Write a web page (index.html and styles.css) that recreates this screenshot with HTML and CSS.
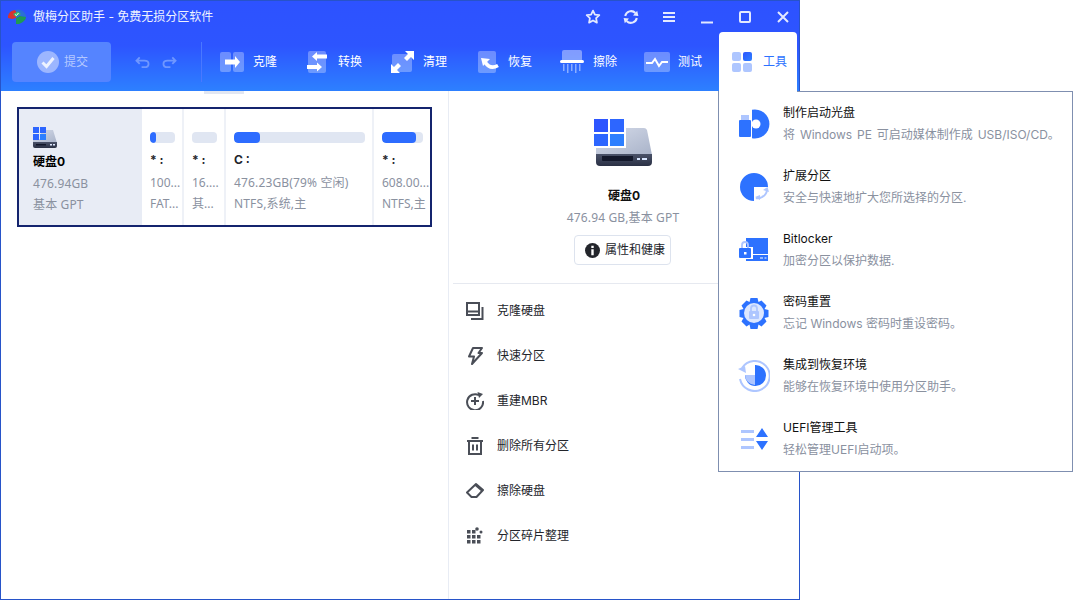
FILE: index.html
```html
<!DOCTYPE html>
<html lang="zh-CN">
<head>
<meta charset="utf-8">
<title>傲梅分区助手</title>
<link rel="stylesheet" href="styles.css">
</head>
<body>
<svg class="defs" width="0" height="0" aria-hidden="true">
  <defs>
    <linearGradient id="hdd" x1="0" y1="0" x2="1" y2="1"><stop offset="0" stop-color="#d6dcea"/><stop offset="1" stop-color="#a9b3c9"/></linearGradient>
    <linearGradient id="hddb" x1="0" y1="0" x2="0" y2="1"><stop offset="0" stop-color="#4a5269"/><stop offset="1" stop-color="#2a3044"/></linearGradient>
    <linearGradient id="tile" x1="0" y1="0" x2="1" y2="1"><stop offset="0" stop-color="#2d55ff"/><stop offset="1" stop-color="#2d80ff"/></linearGradient>
  </defs>
</svg>
<div class="window">
  <header class="header">
    <div class="titlebar">
      <svg class="logo" width="18" height="16" viewBox="0 0 18 16">
        <path d="M0 7 Q1 2 7 1 L9 2 L8 6 L8 9 L4 10 L0 9Z" fill="#d8332f"/>
        <path d="M7 1 Q14 -1 18 6 L18 8 L12 7 L9 4Z" fill="#2a6fd6"/>
        <path d="M8 9 L12 7 L18 8 Q18 12 11 15 L8 15Z" fill="#1f9a55"/>
        <path d="M5 5 L10 2.500 L13 5 L8 8Z" fill="#36b66c"/>
        <path d="M7 5.500 L8.500 6.500 L10.500 4" fill="none" stroke="#e8fff0" stroke-width="1"/>
      </svg>
      <span class="app-title">傲梅分区助手 - 免费无损分区软件</span>
      <div class="win-buttons">
        <svg class="wb" viewBox="0 0 16 16"><path d="M8 1.600 L9.900 5.600 L14.300 6.200 L11.100 9.200 L11.900 13.600 L8 11.500 L4.100 13.600 L4.900 9.200 L1.700 6.200 L6.100 5.600Z" fill="none" stroke="#e3e9ff" stroke-width="1.800" stroke-linejoin="round"/></svg>
        <svg class="wb" viewBox="0 0 16 16"><path d="M2.200 7 A6 6 0 0 1 12.400 4" fill="none" stroke="#e3e9ff" stroke-width="2"/><path d="M13.800 9 A6 6 0 0 1 3.600 12" fill="none" stroke="#e3e9ff" stroke-width="2"/><path d="M10 6.400 L15.400 7 L14.200 1.800Z M6 9.600 L.6 9 L1.800 14.200Z" fill="#e3e9ff"/></svg>
        <svg class="wb" viewBox="0 0 16 16"><path d="M2 3h12v2H2zM2 7h12v2H2zM2 11h12v2H2z" fill="#e3e9ff"/></svg>
        <svg class="wb" viewBox="0 0 16 16"><path d="M2 12.500h12v2H2z" fill="#e3e9ff"/></svg>
        <svg class="wb" viewBox="0 0 16 16"><rect x="3" y="3" width="10" height="10" rx="1" fill="none" stroke="#e3e9ff" stroke-width="2"/></svg>
        <svg class="wb" viewBox="0 0 16 16"><path d="M3 3 L13 13 M13 3 L3 13" stroke="#e3e9ff" stroke-width="2"/></svg>
      </div>
    </div>
    <div class="toolbar">
      <button class="submit">
        <svg width="22" height="22" viewBox="0 0 22 22"><circle cx="11" cy="11" r="11" fill="#b4c7ff" opacity=".75"/><path d="M5.500 11.500 L9.500 15.500 L16.500 7" fill="none" stroke="#edf2ff" stroke-width="3"/></svg>
        <span>提交</span>
      </button>
      <div class="history">
        <svg width="15" height="13" viewBox="0 0 16 14"><path d="M5 1.500 L1.500 5 L5 8.500 M2 5 H10 Q14.500 5 14.500 8.500 Q14.500 12 10 12 H7" fill="none" stroke="#6f97ff" stroke-width="2"/></svg>
        <svg width="15" height="13" viewBox="0 0 16 14"><path d="M11 1.500 L14.500 5 L11 8.500 M14 5 H6 Q1.500 5 1.500 8.500 Q1.500 12 6 12 H9" fill="none" stroke="#6f97ff" stroke-width="2"/></svg>
      </div>
      <div class="tool-sep"></div>
      <nav class="tools">
        <a class="tool">
          <svg width="24" height="20" viewBox="0 0 24 20"><rect width="11" height="20" rx="2" fill="#fff" opacity=".3"/><rect x="13" width="11" height="20" rx="2" fill="#fff" opacity=".3"/><path d="M5 7.500h10V4l5 6-5 6v-3.500H5z" fill="#fff"/></svg>
          <span>克隆</span>
        </a>
        <a class="tool tool-wide">
          <svg width="20" height="22" viewBox="0 0 20 22"><rect x="1" width="18" height="22" rx="2" fill="#fff" opacity=".3"/><path d="M20 3.500H10V1L5 5.500l5 4.500V7.500h10zM0 14h10v-2.500l5 4.500-5 4.500V18H0z" fill="#fff"/></svg>
          <span>转换</span>
        </a>
        <a class="tool">
          <svg width="23" height="22" viewBox="0 0 23 22"><rect x="1" y="3" width="20" height="18" rx="2" fill="#fff" opacity=".3"/><path d="M14 0h9v9l-3-3-4 4-3-3 4-4zM9 22H0v-9l3 3 4-4 3 3-4 4z" fill="#fff"/></svg>
          <span>清理</span>
        </a>
        <a class="tool">
          <svg width="21" height="22" viewBox="0 0 21 22"><rect width="18" height="22" rx="2" fill="#fff" opacity=".3"/><path d="M3 7 L12 8 L5 15Z" fill="#fff"/><path d="M7 11 Q12 19 20 14.500" fill="none" stroke="#fff" stroke-width="3.500"/></svg>
          <span>恢复</span>
        </a>
        <a class="tool">
          <svg width="24" height="24" viewBox="0 0 24 24"><path d="M2 2Q2 0 4 0H20Q22 0 22 2V10H2z" fill="#fff" opacity=".4"/><rect y="10" width="24" height="3" rx="1.500" fill="#fff"/><path d="M3 14h1.500v7H3zM7 14h1.500v9H7zM11 14h1.500v7H11zM15 14h1.500v9H15zM19 14h1.500v7H19z" fill="#fff" opacity=".45"/></svg>
          <span>擦除</span>
        </a>
        <a class="tool tool-tight">
          <svg width="26" height="20" viewBox="0 0 26 20"><rect width="26" height="20" rx="2" fill="#fff" opacity=".3"/><path d="M2 11h6l3-4 4 7 3-4h6" fill="none" stroke="#fff" stroke-width="2"/></svg>
          <span>测试</span>
        </a>
        <a class="tool tool-active">
          <svg width="20" height="20" viewBox="0 0 20 20"><rect width="9" height="9" rx="2" fill="#aec6ff"/><rect x="11" width="9" height="9" rx="2" fill="url(#tile)"/><rect y="11" width="9" height="9" rx="2" fill="#aec6ff"/><rect x="11" y="11" width="9" height="9" rx="2" fill="#aec6ff"/></svg>
          <span>工具</span>
        </a>
      </nav>
    </div>
  </header>
  <main class="main">
    <section class="left">
      <div class="scroll-thumb"></div>
      <div class="disk-card">
        <div class="cell cell-disk">
          <svg class="disk-icon-small" width="24" height="21" viewBox="0 0 24 21"><path d="M8 3H20L24 16H0V12H8z" fill="url(#hdd)"/><path d="M0 15H24V19Q24 21 22 21H2Q0 21 0 19z" fill="url(#hddb)"/><path d="M3 17h10v1.500H3z" fill="#12172a"/><path d="M17 17h2v1.500h-2zM20 17h2v1.500h-2z" fill="#dfe9ff"/><rect width="6" height="6" fill="#2d66ff"/><rect x="7" width="6" height="6" fill="#2d66ff"/><rect y="7" width="6" height="6" fill="#2d66ff"/><rect x="7" y="7" width="6" height="6" fill="#2d7fff"/></svg>
          <div class="disk-name">硬盘0</div>
          <div class="meta">476.94GB</div>
          <div class="meta">基本 GPT</div>
        </div>
        <div class="cell part part-a">
          <div class="bar"><i class="fill" style="width:24%"></i></div>
          <div class="part-name">* :</div>
          <div class="meta clip">100...</div>
          <div class="meta clip">FAT...</div>
        </div>
        <div class="cell part part-b">
          <div class="bar"></div>
          <div class="part-name">* :</div>
          <div class="meta clip">16....</div>
          <div class="meta clip">其...</div>
        </div>
        <div class="cell part part-c">
          <div class="bar"><i class="fill" style="width:20%"></i></div>
          <div class="part-name">C :</div>
          <div class="meta">476.23GB(79% 空闲)</div>
          <div class="meta">NTFS,系统,主</div>
        </div>
        <div class="cell part part-d">
          <div class="bar"><i class="fill" style="width:83%"></i></div>
          <div class="part-name">* :</div>
          <div class="meta clip">608.00...</div>
          <div class="meta clip">NTFS,主</div>
        </div>
      </div>
    </section>
    <aside class="right">
      <div class="summary">
        <svg class="disk-icon" width="58" height="47" viewBox="0 0 58 47"><path d="M30 9H50Q52 9 53 11L58 36H2L2 28H30z" fill="url(#hdd)"/><path d="M2 35H58V43Q58 47 54 47H6Q2 47 2 43z" fill="url(#hddb)"/><path d="M8 37H39V41Q39 42 38 42H9Q8 42 8 41z" fill="#14192c"/><path d="M43 39h3v2h-3zM48 39h5v2h-5z" fill="#d8e6ff"/><rect x="-1" y="-1" width="33" height="30" fill="#fff"/><rect width="14" height="13" fill="#2d55ff"/><rect x="16" width="14" height="13" fill="#2d66ff"/><rect y="15" width="14" height="12" fill="#2d66ff"/><rect x="16" y="15" width="14" height="12" fill="#2d7fff"/></svg>
        <div class="summary-name">硬盘0</div>
        <div class="meta summary-meta">476.94 GB,基本 GPT</div>
        <button class="health">
          <svg width="15" height="15" viewBox="0 0 15 15"><circle cx="7.500" cy="7.500" r="7.500" fill="#23252b"/><path d="M6.300 2.800h2.400v2.200H6.300zM6.300 6.300h2.400v6H6.300z" fill="#fff"/></svg>
          <span>属性和健康</span>
        </button>
      </div>
      <ul class="actions">
        <li><svg width="18" height="18" viewBox="0 0 18 18"><path d="M1 1h12v12H1zM1 9.500h12" fill="none" stroke="#4a4e57" stroke-width="2"/><path d="M16.500 5v12H5" fill="none" stroke="#4a4e57" stroke-width="2"/></svg><span>克隆硬盘</span></li>
        <li><svg width="18" height="18" viewBox="0 0 18 18"><path d="M7 1h9l-3.500 5H16L6 17l2-7.500H3z" fill="none" stroke="#4a4e57" stroke-width="2" stroke-linejoin="round"/></svg><span>快速分区</span></li>
        <li><svg width="18" height="18" viewBox="0 0 18 18"><path d="M13 3.200A8 8 0 1 0 17 9" fill="none" stroke="#4a4e57" stroke-width="2"/><path d="M11.500 0l5.500 2-4 4zM5 8h3V5h2v3h3v2h-3v3H8v-3H5z" fill="#4a4e57"/></svg><span>重建MBR</span></li>
        <li><svg width="18" height="18" viewBox="0 0 18 18"><path d="M1 3h16v2H1zM5.500 0h7v2h-7z" fill="#4a4e57"/><path d="M3 5v12h12V5M7 7.500v6M11 7.500v6" fill="none" stroke="#4a4e57" stroke-width="2"/></svg><span>删除所有分区</span></li>
        <li><svg width="18" height="18" viewBox="0 0 18 18"><path d="M10 2 L17 8 L10.500 15 H5.500 L1 10.500Z" fill="none" stroke="#4a4e57" stroke-width="2" stroke-linejoin="round"/><path d="M10 2 L17 8 L15.500 9.500 L8.500 3.500Z" fill="#4a4e57"/></svg><span>擦除硬盘</span></li>
        <li><svg width="18" height="18" viewBox="0 0 18 18"><g fill="#4a4e57"><rect x="1" y="3" width="3.500" height="3.500"/><rect x="6" y="3" width="3.500" height="3.500"/><rect x="1" y="8" width="3.500" height="3.500"/><rect x="6" y="8" width="3.500" height="3.500"/><rect x="11" y="8" width="3.500" height="3.500"/><rect x="1" y="13" width="3.500" height="3.500"/><rect x="6" y="13" width="3.500" height="3.500"/><rect x="11" y="13" width="3.500" height="3.500"/><circle cx="11" cy="2" r="1.800"/><circle cx="15" cy="5" r="1.500"/></g></svg><span>分区碎片整理</span></li>
      </ul>
    </aside>
  </main>
</div>
<div class="popover">
  <div class="pop-item">
    <svg width="32" height="30" viewBox="0 0 32 30"><path d="M14 .8A14.500 14.500 0 1 1 14 29.200z" fill="#2d72ff"/><circle cx="18" cy="15" r="4.500" fill="#fff"/><rect x="1" y="11" width="12" height="17" rx="1" fill="#2d72ff"/><rect x="3" y="6" width="8" height="5" fill="#aec6ff"/></svg>
    <div><div class="pop-title">制作启动光盘</div><div class="pop-desc pop-desc-wide">将 Windows PE 可启动媒体制作成 USB/ISO/CD。</div></div>
  </div>
  <div class="pop-item">
    <svg width="32" height="30" viewBox="0 0 32 30"><path d="M16 1A14 14 0 0 1 30 15H16V29A14 14 0 0 1 16 1z" fill="#2d72ff"/><path d="M29 18A9 9 0 0 1 24 25M18 26Q21 27 24 25" fill="none" stroke="#aec6ff" stroke-width="2"/><path d="M25 18l4.500-3 1.500 5zM17 25l5-2 0 5z" fill="#aec6ff"/></svg>
    <div><div class="pop-title">扩展分区</div><div class="pop-desc">安全与快速地扩大您所选择的分区.</div></div>
  </div>
  <div class="pop-item">
    <svg width="32" height="24" viewBox="0 0 32 24"><path d="M8 0H30V23H8V21H15V9H8z" fill="#2d72ff"/><path d="M15 16.500H30M22 20h3M26.500 20h2" stroke="#fff" stroke-width="1"/><rect x="1" y="10" width="12" height="10" rx="1" fill="#2d72ff"/><path d="M4 10V7a3 3 0 0 1 6 0V10" fill="none" stroke="#aec6ff" stroke-width="1.800"/><rect x="6" y="14" width="2.500" height="2.500" fill="#fff"/></svg>
    <div><div class="pop-title">Bitlocker</div><div class="pop-desc">加密分区以保护数据.</div></div>
  </div>
  <div class="pop-item">
    <svg width="32" height="32" viewBox="0 0 32 32"><path d="M12.500 1h7l1 4 3-1.500 5 5-2 3.500 4 1v7l-4 1 2 3.500-5 5-3-2-1 4.500h-7l-1-4.500-3 2-5-5 2-3.500-4-1v-7l4-1-2-3.500 5-5 3 1.500z" fill="#2d72ff"/><circle cx="16" cy="16" r="10" fill="#dce7ff"/><rect x="11" y="14" width="10" height="8" rx="1" fill="#aec6ff"/><path d="M13 14v-2.500a3 3 0 0 1 6 0V14" fill="none" stroke="#aec6ff" stroke-width="1.800"/><circle cx="16" cy="18" r="1.300" fill="#fff"/></svg>
    <div><div class="pop-title">密码重置</div><div class="pop-desc">忘记 Windows 密码时重设密码。</div></div>
  </div>
  <div class="pop-item">
    <svg width="32" height="32" viewBox="0 0 32 32"><path d="M4 8A15 15 0 1 1 2 19" fill="none" stroke="#aec6ff" stroke-width="2"/><path d="M0 9l7-3 1 7z" fill="#aec6ff"/><path d="M17 5A10.500 10.500 0 1 1 7 15H17z" fill="#2d72ff"/><path d="M7 15H17V25A10 10 0 0 1 7 15z" fill="#aec6ff"/></svg>
    <div><div class="pop-title">集成到恢复环境</div><div class="pop-desc">能够在恢复环境中使用分区助手。</div></div>
  </div>
  <div class="pop-item">
    <svg width="32" height="24" viewBox="0 0 32 24"><path d="M3 3h13v3H3zM3 11h13v3H3zM3 19h13v3H3z" fill="#aec6ff"/><path d="M18 10l6-9 6 9zM18 14h12l-6 9z" fill="#2d72ff"/></svg>
    <div><div class="pop-title">UEFI管理工具</div><div class="pop-desc">轻松管理UEFI启动项。</div></div>
  </div>
</div>
</body>
</html>
```

FILE: styles.css
```css
* { box-sizing: border-box; }
html, body { margin: 0; padding: 0; height: 600px; overflow: hidden; background: #fff; }
body { font: 12px/18px Inter, "Noto Sans CJK SC", sans-serif; color: #23252b; position: relative; }
.defs { position: absolute; }
svg { display: block; flex: none; }

.window { width: 800px; height: 600px; border: 1px solid #2753c9; display: flex; flex-direction: column; background: #fff; }
.header { height: 90px; background: linear-gradient(180deg, #2d52ff 0%, #2d55ff 50%, #2d80ff 100%); color: #fff; }

.titlebar { height: 31px; display: flex; align-items: center; padding-left: 7px; }
.logo { margin-right: 7px; }
.app-title { color: #eef2ff; }
.win-buttons { margin-left: auto; margin-right: 8px; display: flex; gap: 22px; }
.wb { width: 16px; height: 16px; }

.toolbar { height: 59px; display: flex; align-items: flex-start; padding-left: 11px; }
.submit { width: 99px; height: 40px; margin-top: 10px; border: 0; border-radius: 4px; background: #5584ff; display: flex; align-items: center; gap: 5px; font: inherit; color: #b4c8ff; padding: 0 0 0 25px; }
.history { width: 90px; height: 40px; margin-top: 10px; display: flex; align-items: center; gap: 12px; padding-left: 24px; }
.tool-sep { width: 1px; height: 40px; margin-top: 10px; background: #4a78ff; }
.tools { flex: 1; height: 59px; display: grid; grid-template-columns: 87px 84px 87px 82px 84px 75px 78px; padding-left: 18px; }
.tool { display: flex; align-items: center; gap: 9px; height: 40px; margin-top: 10px; color: #fff; }
.tool-wide { gap: 11px; }
.tool-tight { gap: 8px; }
.tool-active { height: 60px; margin-top: 0; padding: 0 0 0 13px; gap: 11px; background: #fff; color: #2d72ff; border-radius: 4px 4px 0 0; position: relative; z-index: 3; }

.main { flex: 1; display: flex; min-height: 0; }
.left { width: 448px; border-right: 1px solid #e8ecf4; padding: 16px 0 0 16px; position: relative; }
.scroll-thumb { position: absolute; left: 203px; top: 0; width: 40px; height: 3px; background: #e2e7f2; }
.disk-card { width: 415px; height: 120px; border: 2px solid #14246e; display: flex; }
.cell { height: 100%; }
.cell-disk { width: 123px; background: #e8ecf5; padding: 18px 0 0 14px; }
.disk-icon-small { margin-bottom: 4px; }
.disk-name { font-weight: 700; color: #000; line-height: 20px; margin-bottom: 1px; }
.meta { font-family: "Noto Sans", "Noto Sans CJK SC", sans-serif; letter-spacing: .15px; color: #8a919f; line-height: 21px; white-space: nowrap; }
.part { border-right: 2px solid #eef1f7; padding: 23px 0 0 8px; overflow: hidden; }
.part-a { width: 42px; }
.part-b { width: 42px; }
.part-c { width: 148px; }
.part-d { width: 56px; border-right: 0; }
.bar { height: 11px; border-radius: 4px; background: #e0e6f2; overflow: hidden; }
.part-a .bar, .part-b .bar { width: 25px; }
.part-c .bar { width: 131px; }
.part-d .bar { width: 41px; }
.fill { display: block; height: 100%; background: #2d6cff; border-radius: 4px; }
.part-name { font-weight: 700; color: #23252b; line-height: 18px; margin: 8px 0 3px; }
.clip { letter-spacing: 0; }

.right { flex: 1; display: flex; flex-direction: column; padding: 0 0 0 4px; }
.summary { height: 193px; border-bottom: 1px solid #e6e9f0; display: flex; flex-direction: column; align-items: center; padding: 28px 7px 0 0; text-align: center; }
.disk-icon { margin-bottom: 20px; }
.summary-name { font-weight: 700; color: #111; line-height: 20px; margin-bottom: 1px; padding-left: 3px; }
.summary-meta { padding-left: 1px; }
.health { margin-top: 7px; height: 30px; width: 97px; border: 1px solid #dde3ee; border-radius: 4px; background: #fff; display: flex; align-items: center; gap: 5px; padding: 0 0 0 10px; font: inherit; color: #23252b; }
.actions { list-style: none; margin: 4px 0 0; padding: 0 0 0 13px; }
.actions li { height: 45px; display: flex; align-items: center; gap: 13px; color: #23252b; }

.popover { position: absolute; left: 718px; top: 91px; width: 355px; height: 381px; background: #fff; border: 1px solid #7f8fb0; padding: 0 0 0 19px; z-index: 2; }
.pop-item { height: 63px; display: flex; align-items: center; gap: 13px; }
.pop-item > svg { width: 32px; }
.pop-title { color: #111; line-height: 21px; position: relative; top: -1px; }
.pop-desc { color: #8a919f; line-height: 21px; white-space: nowrap; }
.pop-desc-wide { word-spacing: 1.5px; }
```
